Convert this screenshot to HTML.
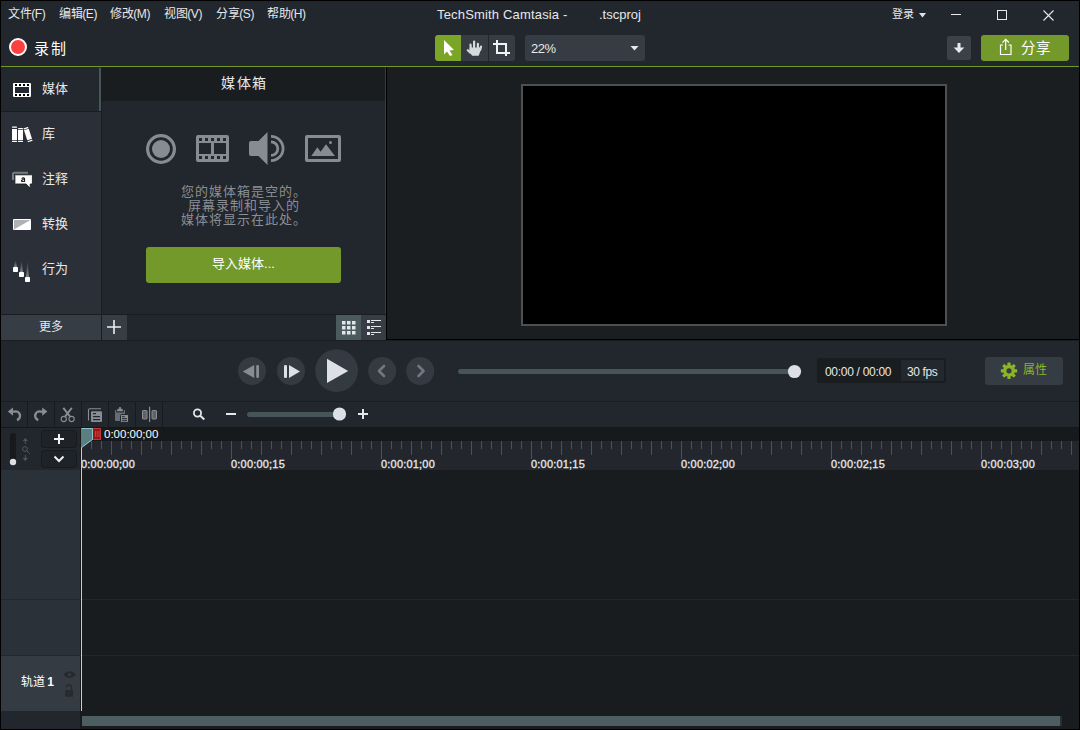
<!DOCTYPE html>
<html lang="zh-CN">
<head>
<meta charset="utf-8">
<style>
*{margin:0;padding:0;box-sizing:border-box}
html,body{width:1080px;height:730px;overflow:hidden;background:#000}
body{position:relative;font-family:"Liberation Sans",sans-serif;color:#e6e8ea}
.a{position:absolute}
.t{position:absolute;white-space:nowrap;line-height:1}
svg{position:absolute;overflow:visible}
</style>
</head>
<body>
<!-- window frame -->
<div class="a" style="left:1px;top:1px;width:1078px;height:728px;background:#22262d"></div>

<!-- menu -->
<div class="t" style="left:8px;top:8px;font-size:12px;letter-spacing:-0.4px">文件(F)</div>
<div class="t" style="left:59px;top:8px;font-size:12px;letter-spacing:-0.4px">编辑(E)</div>
<div class="t" style="left:110px;top:8px;font-size:12px;letter-spacing:-0.4px">修改(M)</div>
<div class="t" style="left:164px;top:8px;font-size:12px;letter-spacing:-0.4px">视图(V)</div>
<div class="t" style="left:216px;top:8px;font-size:12px;letter-spacing:-0.4px">分享(S)</div>
<div class="t" style="left:267px;top:8px;font-size:12px;letter-spacing:-0.4px">帮助(H)</div>
<div class="t" style="left:437px;top:8px;font-size:13px;letter-spacing:0.17px">TechSmith Camtasia -</div>
<div class="t" style="left:599px;top:8px;font-size:13px">.tscproj</div>

<!-- title right -->
<div class="t" style="left:892px;top:9px;font-size:11px">登录</div>
<svg style="left:0;top:0" width="1080" height="30">
  <path d="M919 13h7l-3.5 4.5z" fill="#dfe3e8"/>
  <rect x="951" y="14" width="10" height="1" fill="#e6e8ea"/>
  <rect x="997.5" y="10.5" width="9" height="9" fill="none" stroke="#e6e8ea" stroke-width="1"/>
  <path d="M1043.5 10.5l10 10M1053.5 10.5l-10 10" stroke="#e6e8ea" stroke-width="1.1"/>
</svg>

<!-- toolbar -->
<div class="a" style="left:9px;top:38px;width:18px;height:18px;border-radius:50%;background:#fc3f3f;border:2px solid #fff"></div>
<div class="t" style="left:34px;top:40.5px;font-size:15px;letter-spacing:1.5px;color:#fff">录制</div>

<div class="a" style="left:435px;top:35px;width:26px;height:26px;background:#7aa526;border-radius:3px 0 0 3px"></div>
<div class="a" style="left:461px;top:35px;width:27px;height:26px;background:#353c44"></div>
<div class="a" style="left:488px;top:35px;width:1px;height:26px;background:#22262d"></div>
<div class="a" style="left:489px;top:35px;width:26px;height:26px;background:#353c44;border-radius:0 3px 3px 0"></div>
<svg style="left:0;top:0" width="1080" height="66">
  <path d="M444 40 L454 50 L449.5 50.5 L452.5 55 L450 56 L447 51.5 L444 54.5 Z" fill="#fff"/>
  <g stroke="#d5d9de" stroke-width="2.2" stroke-linecap="round" fill="none"><path d="M470.5 44.6l.3 4"/><path d="M474.1 41.6v6"/><path d="M477.9 43.8v4"/><path d="M481.1 46.5l-1 3.5"/><path d="M467.8 50.2l2.6 2.4"/></g>
  <path d="M469.5 47.5h10.6l1 1.8l-2.4 6.4h-6.5l-2.9-3.7z" fill="#d5d9de"/>
  <path d="M497 40v13h13M493 44h13v12" fill="none" stroke="#f0f2f4" stroke-width="2"/>
</svg>

<div class="a" style="left:525px;top:35px;width:120px;height:26px;background:#353c44;border-radius:3px"></div>
<div class="t" style="left:531px;top:42px;font-size:13px;letter-spacing:-0.5px;color:#e6e8ea">22%</div>
<svg style="left:0;top:0" width="1080" height="66"><path d="M630.5 46h8l-4 4.5z" fill="#e6e8ea"/></svg>

<div class="a" style="left:947px;top:36px;width:24px;height:24px;background:#3a4149;border-radius:2px"></div>
<svg style="left:0;top:0" width="1080" height="66"><path d="M957.5 43h3v4.5h3.8l-5.3 5.5l-5.3-5.5h3.8z" fill="#e8eaee"/></svg>
<div class="a" style="left:981px;top:35px;width:88px;height:26px;background:#73992a;border-radius:3px"></div>
<svg style="left:0;top:0" width="1080" height="66">
  <path d="M1003 45h-2.5v9.5h10.5v-9.5h-2.5" fill="none" stroke="#fff" stroke-width="1.2"/>
  <path d="M1005.7 50v-10.5M1002.5 42.5l3.2-3.2l3.2 3.2" fill="none" stroke="#fff" stroke-width="1.2"/>
</svg>
<div class="t" style="left:1021px;top:40.5px;font-size:14.5px;letter-spacing:1.2px;color:#fff">分享</div>

<!-- green separator -->
<div class="a" style="left:1px;top:66px;width:1078px;height:1px;background:#72982a"></div>
<!-- left sidebar -->
<div class="a" style="left:1px;top:67px;width:100px;height:248px;background:#2b3038"></div>
<div class="a" style="left:1px;top:67px;width:98px;height:44px;background:#23272e"></div>
<div class="a" style="left:99px;top:68px;width:2px;height:43px;background:#4a555a"></div>
<div class="a" style="left:1px;top:111px;width:100px;height:1px;background:#1a1d20"></div>
<div class="a" style="left:101px;top:67px;width:1px;height:273px;background:#1a1d20"></div>

<svg style="left:0;top:0" width="110" height="300">
  <!-- film -->
  <rect x="13" y="83" width="18" height="14" rx="1" fill="#fff"/>
  <rect x="15" y="87" width="14" height="6" fill="#23272e"/>
  <g fill="#000"><rect x="15" y="84" width="2" height="2"/><rect x="19" y="84" width="2" height="2"/><rect x="23" y="84" width="2" height="2"/><rect x="27" y="84" width="2" height="2"/>
  <rect x="15" y="94" width="2" height="2"/><rect x="19" y="94" width="2" height="2"/><rect x="23" y="94" width="2" height="2"/><rect x="27" y="94" width="2" height="2"/></g>
  <!-- library -->
  <g fill="#fff">
   <rect x="12" y="126.5" width="5" height="1.3" rx=".6"/><rect x="12" y="129" width="5" height="11"/><rect x="12" y="140.8" width="5" height="1.3" rx=".6"/>
   <rect x="18" y="128" width="5" height="1.3" rx=".6"/><rect x="18" y="130" width="5" height="10"/><rect x="18" y="140.8" width="5" height="1.3" rx=".6"/>
   <g transform="rotate(-18 28 134.5)"><rect x="25.5" y="127.3" width="5" height="1.3" rx=".6"/><rect x="25.5" y="129.3" width="5" height="10.5"/><rect x="25.5" y="140.6" width="5" height="1.3" rx=".6"/></g>
  </g>
  <!-- annotation -->
  <path d="M13 180v-6a1.2 1.2 0 0 1 1.2-1.2h13.8" fill="none" stroke="#797d83" stroke-width="2"/>
  <path d="M15.5 174.8h16.3a.6 .6 0 0 1 .6.6v8.6h-2.2v4.3l-4.1-4.3h-10.6a.6 .6 0 0 1-.6-.6v-8z" fill="#fff" stroke="#1c1f23" stroke-width=".9"/>
  <path d="M21.3 178.2c.5-.7 1.2-.9 1.9-.9c1.2 0 1.9.6 1.9 1.6v3h-.9l-.1-.5c-.4.4-.9.6-1.5.6c-1 0-1.7-.5-1.7-1.3c0-1 .9-1.5 2.2-1.5h.9c0-.5-.3-.8-.9-.8c-.5 0-.8.2-1.1.5z M24.1 179.9h-.8c-.6 0-1 .2-1 .6c0 .3.3.5.7.5c.6 0 1.1-.4 1.1-1z" fill="#1a1a1a"/>
  <!-- transition -->
  <rect x="13" y="219" width="18" height="11" rx="1" fill="#fff"/>
  <path d="M14 220h16.5L14 229.5z" fill="#afb1b4"/>
  <!-- behaviors -->
  <defs><linearGradient id="bg1" x1="0" y1="0" x2="0" y2="1"><stop offset="0" stop-color="#2b3038"/><stop offset="1" stop-color="#7d838a"/></linearGradient></defs>
  <path d="M15.5 259.5L17 267h-3z" fill="url(#bg1)"/>
  <path d="M21.5 259.5L23 272h-3z" fill="url(#bg1)"/>
  <path d="M27.5 260L29 277h-3z" fill="url(#bg1)"/>
  <rect x="13" y="267" width="5" height="5" rx=".8" fill="#fff"/>
  <rect x="19" y="272" width="5" height="5" rx=".8" fill="#fff"/>
  <rect x="25" y="277" width="5" height="5" rx=".8" fill="#fff"/>
</svg>
<div class="t" style="left:42px;top:82px;font-size:13px">媒体</div>
<div class="t" style="left:42px;top:127px;font-size:13px">库</div>
<div class="t" style="left:42px;top:172px;font-size:13px">注释</div>
<div class="t" style="left:42px;top:217px;font-size:13px">转换</div>
<div class="t" style="left:42px;top:262px;font-size:13px">行为</div>

<!-- more bar -->
<div class="a" style="left:1px;top:314px;width:385px;height:1px;background:#1a1d20"></div>
<div class="a" style="left:1px;top:315px;width:100px;height:25px;background:#363d45"></div>
<div class="t" style="left:1px;top:321px;width:100px;text-align:center;font-size:12px">更多</div>
<div class="a" style="left:102px;top:315px;width:25px;height:25px;background:#363d45"></div>
<div class="a" style="left:127px;top:315px;width:209px;height:25px;background:#22262d"></div>
<div class="a" style="left:336px;top:315px;width:25px;height:25px;background:#4a5a5e"></div>
<div class="a" style="left:361px;top:315px;width:25px;height:25px;background:#363d45"></div>
<svg style="left:0;top:0" width="400" height="345">
  <path d="M114 320v14M107 327h14" stroke="#eceef0" stroke-width="1.6"/>
  <g fill="#e3e6e9">
   <rect x="342" y="321" width="3.5" height="3.5"/><rect x="347" y="321" width="3.5" height="3.5"/><rect x="352" y="321" width="3.5" height="3.5"/>
   <rect x="342" y="326" width="3.5" height="3.5"/><rect x="347" y="326" width="3.5" height="3.5"/><rect x="352" y="326" width="3.5" height="3.5"/>
   <rect x="342" y="331" width="3.5" height="3.5"/><rect x="347" y="331" width="3.5" height="3.5"/><rect x="352" y="331" width="3.5" height="3.5"/>
  </g>
  <g fill="#e3e6e9">
   <rect x="367" y="320" width="3" height="3"/><rect x="371" y="320" width="10" height="1"/><rect x="371" y="322" width="3" height="1"/>
   <rect x="367" y="326" width="3" height="3"/><rect x="371" y="326" width="10" height="1"/><rect x="371" y="328" width="3" height="1"/>
   <rect x="367" y="332" width="3" height="3"/><rect x="371" y="332" width="10" height="1"/><rect x="371" y="334" width="3" height="1"/>
  </g>
</svg>

<!-- media bin -->
<div class="a" style="left:102px;top:67px;width:284px;height:34px;background:#1a1d20"></div>
<div class="t" style="left:103px;top:76px;width:283px;text-align:center;font-size:14px;letter-spacing:1.5px">媒体箱</div>
<div class="a" style="left:102px;top:101px;width:284px;height:213px;background:#22262d"></div>
<div class="a" style="left:385px;top:67px;width:1px;height:247px;background:#363d45"></div>
<div class="a" style="left:386px;top:67px;width:1px;height:273px;background:#000"></div>
<svg style="left:0;top:0" width="400" height="200">
  <g fill="#878b92">
  <circle cx="161" cy="149" r="13.4" fill="none" stroke="#878b92" stroke-width="3.2"/>
  <circle cx="161" cy="149" r="9"/>
  <path d="M198 135h29a2 2 0 0 1 2 2v23a2 2 0 0 1-2 2h-29a2 2 0 0 1-2-2v-23a2 2 0 0 1 2-2z M199 143v11h12v-11z M214 143v11h12v-11z"/>
  <path d="M251 141h7.5l9-9v33l-9-9h-7.5a2 2 0 0 1-2-2v-11a2 2 0 0 1 2-2z"/>
  <path d="M305 137a2 2 0 0 1 2-2h32a2 2 0 0 1 2 2v23a2 2 0 0 1-2 2h-32a2 2 0 0 1-2-2z M308 138v21h30v-21z"/>
  <path d="M311.3 156L317.4 147.3L320.6 151.8L326 144.2L335 156z"/>
  <circle cx="330.5" cy="142.5" r="1.5"/>
  </g>
  <g fill="#23272e">
   <rect x="199" y="138" width="3" height="3"/><rect x="205" y="138" width="3" height="3"/><rect x="211" y="138" width="3" height="3"/><rect x="217" y="138" width="3" height="3"/><rect x="223" y="138" width="3" height="3"/>
   <rect x="199" y="156" width="3" height="3"/><rect x="205" y="156" width="3" height="3"/><rect x="211" y="156" width="3" height="3"/><rect x="217" y="156" width="3" height="3"/><rect x="223" y="156" width="3" height="3"/>
  </g>
  <path d="M271 141.8a6.8 6.8 0 0 1 0 13.6" fill="none" stroke="#878b92" stroke-width="2.8"/>
  <path d="M271 136.4a12.1 12.1 0 0 1 0 24.2" fill="none" stroke="#878b92" stroke-width="2.8"/>
</svg>
<div class="t" style="left:102px;top:185px;width:283px;text-align:center;font-size:13px;line-height:14px;letter-spacing:1px;text-indent:1px;color:#8a8e95;white-space:pre">您的媒体箱是空的。
屏幕录制和导入的
媒体将显示在此处。</div>
<div class="a" style="left:146px;top:247px;width:195px;height:36px;background:#73992a;border-radius:3px"></div>
<div class="t" style="left:146px;top:257px;width:195px;text-align:center;font-size:13px;color:#fff">导入媒体...</div>

<!-- canvas area -->
<div class="a" style="left:387px;top:67px;width:692px;height:272px;background:#1b1e21"></div>
<div class="a" style="left:521px;top:84px;width:426px;height:242px;background:#000;border:2px solid #4f4f4f"></div>
<!-- separators -->
<div class="a" style="left:386px;top:339px;width:693px;height:1px;background:#000"></div>
<div class="a" style="left:1px;top:340px;width:1078px;height:1px;background:#1a1d20"></div>

<!-- playback row -->
<svg style="left:0;top:0" width="1080" height="400">
  <g fill="#333a42">
   <circle cx="252" cy="371" r="14"/><circle cx="291" cy="371" r="14"/>
   <circle cx="336.6" cy="370.6" r="21.4"/>
   <circle cx="382.2" cy="371" r="14"/><circle cx="420.2" cy="371" r="14"/>
  </g>
  <path d="M242.8 371.5L254.2 365v13z" fill="#878b92"/>
  <rect x="256.2" y="365" width="2.8" height="13" rx="1.2" fill="#878b92"/>
  <rect x="284" y="365" width="3" height="13" rx="1.2" fill="#dde0e6"/>
  <path d="M289 365v13l11-6.5z" fill="#dde0e6"/>
  <path d="M327 358.8v24.2l21.2-12.1z" fill="#dde0e6"/>
  <path d="M384 366l-5 5l5 5" fill="none" stroke="#72767d" stroke-width="2.6" stroke-linecap="round" stroke-linejoin="round"/>
  <path d="M418.5 366l5 5l-5 5" fill="none" stroke="#72767d" stroke-width="2.6" stroke-linecap="round" stroke-linejoin="round"/>
  <rect x="458" y="369" width="336" height="5" rx="2.5" fill="#45555a"/>
  <circle cx="794.5" cy="371.5" r="6.6" fill="#dcdfe4"/>
</svg>
<div class="a" style="left:817px;top:358px;width:129px;height:25px;background:#1a1d20;border-radius:2px"></div>
<div class="a" style="left:901px;top:360px;width:43px;height:21px;background:#23272e;border-radius:1px"></div>
<div class="t" style="left:825px;top:366px;font-size:12px;letter-spacing:-0.3px">00:00 / 00:00</div>
<div class="t" style="left:907px;top:366px;font-size:12px;letter-spacing:-0.4px">30 fps</div>
<div class="a" style="left:985px;top:357px;width:78px;height:28px;background:#353c44;border-radius:3px"></div>
<svg style="left:0;top:0" width="1080" height="400">
  <g transform="translate(1009 370.8)" fill="#8ab526">
   <circle r="6"/>
   <g id="teeth"><rect x="-1.6" y="-8.2" width="3.2" height="3.5" rx=".6"/></g>
   <use href="#teeth" transform="rotate(45)"/><use href="#teeth" transform="rotate(90)"/><use href="#teeth" transform="rotate(135)"/>
   <use href="#teeth" transform="rotate(180)"/><use href="#teeth" transform="rotate(225)"/><use href="#teeth" transform="rotate(270)"/><use href="#teeth" transform="rotate(315)"/>
   <circle r="2.6" fill="#353c44"/>
  </g>
</svg>
<div class="t" style="left:1023px;top:364px;font-size:12px;color:#8ab526">属性</div>

<div class="a" style="left:1px;top:401px;width:1078px;height:1px;background:#1a1d20"></div>
<!-- timeline toolbar -->
<svg style="left:0;top:0" width="1080" height="430">
  <g fill="#181b1e"><rect x="27" y="402" width="1" height="25"/><rect x="54" y="402" width="1" height="25"/><rect x="81" y="402" width="1" height="25"/><rect x="108" y="402" width="1" height="25"/><rect x="135" y="402" width="1" height="25"/><rect x="162" y="402" width="1" height="25"/></g>
  <g fill="none" stroke="#898d93" stroke-width="2.4">
   <path d="M12 411.6h2.5a4.3 4.3 0 0 1 2.4 8.4"/>
   <path d="M43.2 411.6h-2.5a4.3 4.3 0 0 0-2.4 8.4"/>
  </g>
  <path d="M7.8 411.6l5.2-4.2v8.4z" fill="#898d93"/>
  <path d="M47.4 411.6l-5.2-4.2v8.4z" fill="#898d93"/>
  <g fill="none" stroke="#898d93">
   <path d="M63.3 407.8l6.6 8.6M71.8 407.8l-6.6 8.6" stroke-width="1.9"/>
   <circle cx="63.8" cy="419" r="2.6" stroke-width="1.1"/>
   <circle cx="71.6" cy="419" r="2.6" stroke-width="1.1"/>
   <path d="M88.5 420.5v-10.5a1.2 1.2 0 0 1 1.2-1.2h11.3" stroke-width="1.1"/>
  </g>
  <rect x="91" y="411.3" width="11" height="10.7" rx="1" fill="#898d93"/>
  <g fill="#22262d"><rect x="93" y="413" width="3" height="1.2"/><rect x="93" y="416" width="7" height="1.2"/><rect x="93" y="419" width="7" height="1.2"/></g>
  <rect x="115" y="410" width="10" height="11" fill="#676b72"/>
  <rect x="116.2" y="409.5" width="7.6" height="2.9" fill="#22262d"/>
  <path d="M117 411.3l.6-2.6h1.6v-1.8h1.6v1.8h1.6l.6 2.6z" fill="#8a8e94"/>
  <rect x="120.5" y="414.5" width="8" height="8" rx="1.2" fill="#8a8e94" stroke="#22262d" stroke-width="1"/>
  <g fill="#22262d"><rect x="122" y="416.2" width="2.8" height="1"/><rect x="122" y="418.2" width="5" height="1"/><rect x="122" y="420.2" width="5" height="1"/></g>
  <rect x="142.5" y="410.5" width="4.5" height="8.5" rx=".6" fill="#5e6269" stroke="#898d93" stroke-width="1"/>
  <rect x="152" y="410.5" width="4.5" height="8.5" rx=".6" fill="#5e6269" stroke="#898d93" stroke-width="1"/>
  <rect x="149" y="406.8" width="1.2" height="15.2" fill="#898d93"/>
  <!-- zoom -->
  <circle cx="197.5" cy="413" r="3.6" fill="none" stroke="#e4e7ea" stroke-width="1.8"/>
  <path d="M200 415.5l4.3 4" stroke="#e4e7ea" stroke-width="2"/>
  <rect x="226" y="413" width="10" height="2" fill="#e4e7ea"/>
  <rect x="247" y="412" width="92" height="5" rx="2.5" fill="#45555a"/>
  <circle cx="339.5" cy="414" r="6.6" fill="#dcdfe4"/>
  <path d="M363 409v10M358 414h10" stroke="#e4e7ea" stroke-width="2"/>
</svg>
<div class="a" style="left:1px;top:427px;width:1078px;height:1px;background:#141719"></div>

<!-- timeline header -->
<div class="a" style="left:1px;top:428px;width:79px;height:42px;background:#22262d"></div><div class="a" style="left:80px;top:428px;width:1px;height:301px;background:#17191b"></div>
<div class="a" style="left:41px;top:430px;width:36px;height:18px;background:#1f2328;border:1px solid #181b1e;border-radius:3px"></div>
<div class="a" style="left:41px;top:450px;width:36px;height:18px;background:#1f2328;border:1px solid #181b1e;border-radius:3px"></div>
<svg style="left:0;top:0" width="100" height="480">
  <rect x="10" y="433" width="6" height="32" rx="3" fill="#17191b"/>
  <circle cx="13" cy="462" r="3.2" fill="#dcdfe4"/>
  <g fill="#4a5a5c">
   <path d="M25.3 438l2.7 3h-5.4z"/><rect x="24.8" y="440.5" width="1" height="3.5"/>
   <path d="M25.3 461l2.7-3h-5.4z"/><rect x="24.8" y="455" width="1" height="3.5"/>
  </g>
  <circle cx="25" cy="449" r="2.4" fill="none" stroke="#4a5a5c" stroke-width="1"/>
  <path d="M26.8 450.8l3 3" stroke="#4a5a5c" stroke-width="1"/>
  <path d="M59 434v10M54 439h10" stroke="#f0f2f4" stroke-width="2"/>
  <path d="M54.5 456.5l4.5 4.5l4.5-4.5" fill="none" stroke="#f0f2f4" stroke-width="2"/>
</svg>

<!-- ruler -->
<div class="a" style="left:81px;top:428px;width:998px;height:13px;background:#171a1c"></div>
<div class="a" style="left:81px;top:441px;width:998px;height:29px;background:#23272d"></div>
<svg style="left:0;top:0" width="1080" height="480"><g fill="#4b5358"><rect x="91" y="441" width="1" height="8"/><rect x="101" y="441" width="1" height="8"/><rect x="111" y="441" width="1" height="14"/><rect x="121" y="441" width="1" height="8"/><rect x="131" y="441" width="1" height="8"/><rect x="141" y="441" width="1" height="14"/><rect x="151" y="441" width="1" height="8"/><rect x="161" y="441" width="1" height="8"/><rect x="171" y="441" width="1" height="14"/><rect x="181" y="441" width="1" height="8"/><rect x="191" y="441" width="1" height="8"/><rect x="201" y="441" width="1" height="14"/><rect x="211" y="441" width="1" height="8"/><rect x="221" y="441" width="1" height="8"/><rect x="231" y="441" width="1" height="18"/><rect x="241" y="441" width="1" height="8"/><rect x="251" y="441" width="1" height="8"/><rect x="261" y="441" width="1" height="14"/><rect x="271" y="441" width="1" height="8"/><rect x="281" y="441" width="1" height="8"/><rect x="291" y="441" width="1" height="14"/><rect x="301" y="441" width="1" height="8"/><rect x="311" y="441" width="1" height="8"/><rect x="321" y="441" width="1" height="14"/><rect x="331" y="441" width="1" height="8"/><rect x="341" y="441" width="1" height="8"/><rect x="351" y="441" width="1" height="14"/><rect x="361" y="441" width="1" height="8"/><rect x="371" y="441" width="1" height="8"/><rect x="381" y="441" width="1" height="18"/><rect x="391" y="441" width="1" height="8"/><rect x="401" y="441" width="1" height="8"/><rect x="411" y="441" width="1" height="14"/><rect x="421" y="441" width="1" height="8"/><rect x="431" y="441" width="1" height="8"/><rect x="441" y="441" width="1" height="14"/><rect x="451" y="441" width="1" height="8"/><rect x="461" y="441" width="1" height="8"/><rect x="471" y="441" width="1" height="14"/><rect x="481" y="441" width="1" height="8"/><rect x="491" y="441" width="1" height="8"/><rect x="501" y="441" width="1" height="14"/><rect x="511" y="441" width="1" height="8"/><rect x="521" y="441" width="1" height="8"/><rect x="531" y="441" width="1" height="18"/><rect x="541" y="441" width="1" height="8"/><rect x="551" y="441" width="1" height="8"/><rect x="561" y="441" width="1" height="14"/><rect x="571" y="441" width="1" height="8"/><rect x="581" y="441" width="1" height="8"/><rect x="591" y="441" width="1" height="14"/><rect x="601" y="441" width="1" height="8"/><rect x="611" y="441" width="1" height="8"/><rect x="621" y="441" width="1" height="14"/><rect x="631" y="441" width="1" height="8"/><rect x="641" y="441" width="1" height="8"/><rect x="651" y="441" width="1" height="14"/><rect x="661" y="441" width="1" height="8"/><rect x="671" y="441" width="1" height="8"/><rect x="681" y="441" width="1" height="18"/><rect x="691" y="441" width="1" height="8"/><rect x="701" y="441" width="1" height="8"/><rect x="711" y="441" width="1" height="14"/><rect x="721" y="441" width="1" height="8"/><rect x="731" y="441" width="1" height="8"/><rect x="741" y="441" width="1" height="14"/><rect x="751" y="441" width="1" height="8"/><rect x="761" y="441" width="1" height="8"/><rect x="771" y="441" width="1" height="14"/><rect x="781" y="441" width="1" height="8"/><rect x="791" y="441" width="1" height="8"/><rect x="801" y="441" width="1" height="14"/><rect x="811" y="441" width="1" height="8"/><rect x="821" y="441" width="1" height="8"/><rect x="831" y="441" width="1" height="18"/><rect x="841" y="441" width="1" height="8"/><rect x="851" y="441" width="1" height="8"/><rect x="861" y="441" width="1" height="14"/><rect x="871" y="441" width="1" height="8"/><rect x="881" y="441" width="1" height="8"/><rect x="891" y="441" width="1" height="14"/><rect x="901" y="441" width="1" height="8"/><rect x="911" y="441" width="1" height="8"/><rect x="921" y="441" width="1" height="14"/><rect x="931" y="441" width="1" height="8"/><rect x="941" y="441" width="1" height="8"/><rect x="951" y="441" width="1" height="14"/><rect x="961" y="441" width="1" height="8"/><rect x="971" y="441" width="1" height="8"/><rect x="981" y="441" width="1" height="18"/><rect x="991" y="441" width="1" height="8"/><rect x="1001" y="441" width="1" height="8"/><rect x="1011" y="441" width="1" height="14"/><rect x="1021" y="441" width="1" height="8"/><rect x="1031" y="441" width="1" height="8"/><rect x="1041" y="441" width="1" height="14"/><rect x="1051" y="441" width="1" height="8"/><rect x="1061" y="441" width="1" height="8"/><rect x="1071" y="441" width="1" height="14"/></g></svg>
<div class="t" style="left:104px;top:429px;font-size:11.5px;color:#fff">0:00:00;00</div>
<div class="t" style="left:81px;top:459px;font-size:11px;letter-spacing:.2px;-webkit-text-stroke:.3px #e8eaec;color:#e8eaec">0:00:00;00</div>
<div class="t" style="left:231px;top:459px;font-size:11px;letter-spacing:.2px;-webkit-text-stroke:.3px #e8eaec;color:#e8eaec">0:00:00;15</div>
<div class="t" style="left:381px;top:459px;font-size:11px;letter-spacing:.2px;-webkit-text-stroke:.3px #e8eaec;color:#e8eaec">0:00:01;00</div>
<div class="t" style="left:531px;top:459px;font-size:11px;letter-spacing:.2px;-webkit-text-stroke:.3px #e8eaec;color:#e8eaec">0:00:01;15</div>
<div class="t" style="left:681px;top:459px;font-size:11px;letter-spacing:.2px;-webkit-text-stroke:.3px #e8eaec;color:#e8eaec">0:00:02;00</div>
<div class="t" style="left:831px;top:459px;font-size:11px;letter-spacing:.2px;-webkit-text-stroke:.3px #e8eaec;color:#e8eaec">0:00:02;15</div>
<div class="t" style="left:981px;top:459px;font-size:11px;letter-spacing:.2px;-webkit-text-stroke:.3px #e8eaec;color:#e8eaec">0:00:03;00</div>

<!-- tracks -->
<div class="a" style="left:81px;top:470px;width:998px;height:259px;background:#191c1f"></div>
<div class="a" style="left:1px;top:470px;width:79px;height:185px;background:#2b3139"></div>
<div class="a" style="left:1px;top:656px;width:79px;height:55px;background:#353b43"></div>
<div class="a" style="left:1px;top:711px;width:79px;height:18px;background:#22262d"></div>
<div class="a" style="left:1px;top:599px;width:1078px;height:1px;background:#23272b"></div>
<div class="a" style="left:1px;top:655px;width:1078px;height:1px;background:#23272b"></div>
<div class="t" style="left:21px;top:676px;font-size:12px;letter-spacing:-0.4px;color:#fff">轨道 <b>1</b></div>
<svg style="left:0;top:0" width="100" height="730">
  <path d="M63.3 674.5c3.5-4.5 9-4.5 12.6 0c-3.6 4.5-9.1 4.5-12.6 0z" fill="#262a30"/>
  <circle cx="69.6" cy="674.5" r="1.6" fill="#353b43"/>
  <rect x="65.2" y="690" width="7.8" height="6.7" rx=".5" fill="#262a30"/>
  <path d="M71.5 690v-2.5a2.5 2.5 0 0 0-5 0" fill="none" stroke="#262a30" stroke-width="1.3"/>
  <rect x="68.6" y="692.2" width="1" height="2.2" fill="#353b43"/>
</svg>
<div class="a" style="left:82px;top:716px;width:978px;height:10px;background:#4d5e62"></div>
<div class="a" style="left:1060px;top:716px;width:2px;height:10px;background:#2a2f35"></div>

<!-- playhead -->
<div class="a" style="left:81px;top:440px;width:1px;height:271px;background:#b4d2e8"></div>
<svg style="left:0;top:0" width="120" height="460">
  <path d="M81 428h12v11l-12 9z" fill="#5a7f82"/>
  <path d="M81.5 428.5h11v10.5" fill="none" stroke="#8ec3c8" stroke-width="1"/>
  <path d="M93 439l-12 9" stroke="#9fc4dc" stroke-width="1"/>
  <rect x="93" y="428" width="8" height="12" fill="#9e1313"/><path d="M93.5 428.5h7v11h-7" fill="none" stroke="#c23a3a" stroke-width="1"/>
  <g fill="#c94a4a"><rect x="95" y="431" width=".8" height="6"/><rect x="96.8" y="431" width=".8" height="6"/><rect x="98.6" y="431" width=".8" height="6"/></g>
</svg>

</body>
</html>
